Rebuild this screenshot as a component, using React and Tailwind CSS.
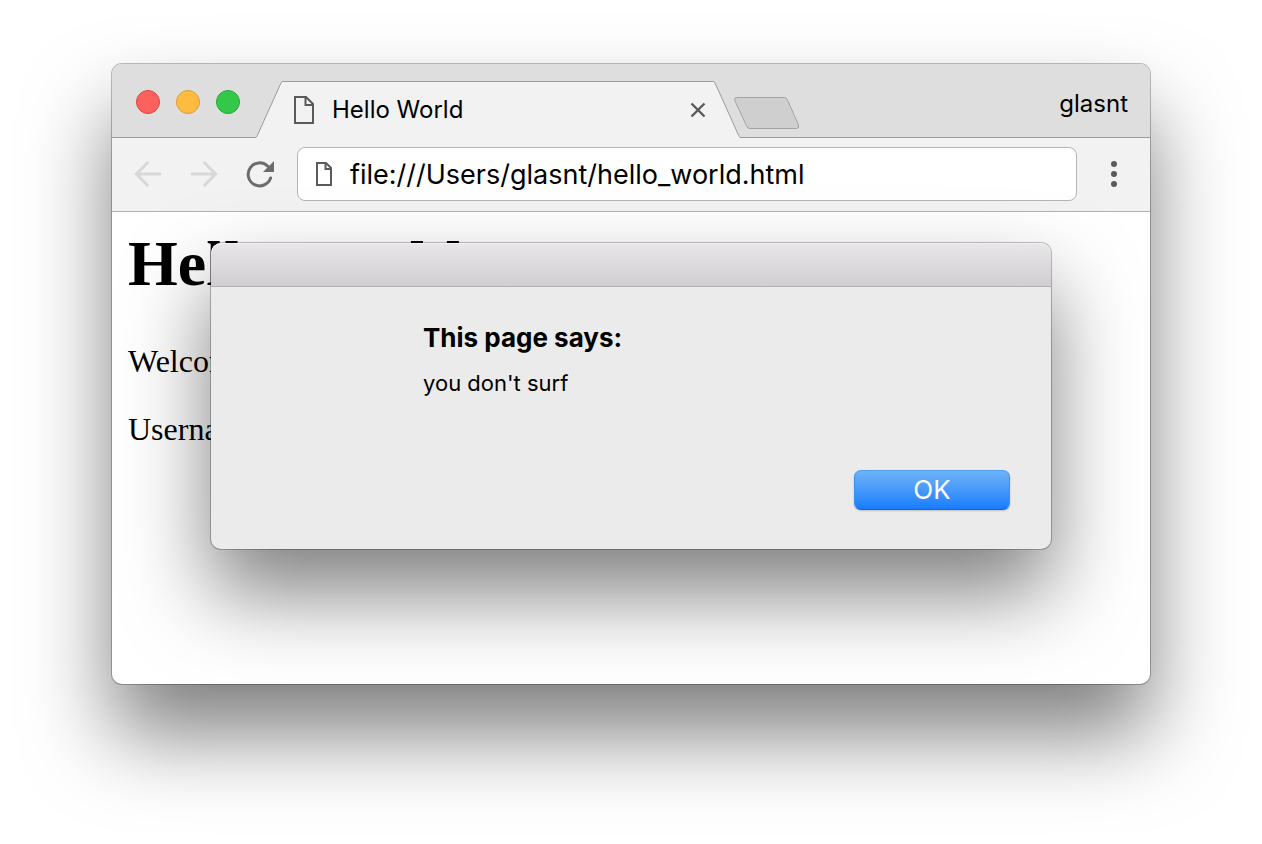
function PageIcon({ className }) {
  return (
    <svg className={className} viewBox="0 0 20 28" fill="none" stroke="#5a5a5a" strokeWidth="2" aria-hidden="true">
      <path d="M1 1H12L19 8V27H1Z" />
      <path d="M11.5 1V9H19" />
    </svg>
  );
}

function SmallPageIcon() {
  return (
    <svg className="h-6 w-4 shrink-0" viewBox="0 0 16 24" fill="none" stroke="#5a5a5a" strokeWidth="2" aria-hidden="true">
      <path d="M1 1H10L15 6V23H1Z" />
      <path d="M9.5 1V7H15" />
    </svg>
  );
}

function TrafficLights() {
  return (
    <div className="flex h-full items-center gap-4 pt-0.5">
      <button aria-label="Close window" className="size-6 rounded-full border border-[#e2463f] bg-[#fc615d]" />
      <button aria-label="Minimize window" className="size-6 rounded-full border border-[#dfa033] bg-[#fdbc40]" />
      <button aria-label="Zoom window" className="size-6 rounded-full border border-[#27aa35] bg-[#34c84a]" />
    </div>
  );
}

function Tab() {
  return (
    <div className="-mb-px flex h-[57px] w-[484px] min-w-0 self-end">
      <svg className="h-full w-[26px] shrink-0" viewBox="0 0 26 57" aria-hidden="true">
        <path d="M-1 56.5Q.5 56.5 1.3 54.500L24.500 3Q25.500 .5 27 .5V57H-1Z" fill="#f2f2f2" />
        <path d="M-1 56.5Q.5 56.5 1.3 54.500L24.500 3Q25.500 .5 27 .5" fill="none" stroke="#9b9b9b" />
      </svg>
      <div className="flex min-w-0 flex-1 items-center gap-[18px] border-t border-[#9b9b9b] bg-[#f2f2f2] pl-3">
        <PageIcon className="h-7 w-5 shrink-0" />
        <span className="flex-1 truncate text-2xl">Hello World</span>
        <button aria-label="Close tab" className="p-2">
          <svg className="size-4" viewBox="0 0 16 16" fill="none" stroke="#5a5a5a" strokeWidth="2.4" aria-hidden="true">
            <path d="M1.5 1.5L14.5 14.5M14.5 1.5L1.5 14.5" />
          </svg>
        </button>
      </div>
      <svg className="h-full w-[26px] shrink-0" viewBox="0 0 26 57" aria-hidden="true">
        <path d="M27 56.5Q25.500 56.5 24.700 54.500L1.500 3Q.5 .5 -1 .5V57H27Z" fill="#f2f2f2" />
        <path d="M27 56.5Q25.500 56.5 24.700 54.500L1.500 3Q.5 .5 -1 .5" fill="none" stroke="#9b9b9b" />
      </svg>
    </div>
  );
}

function TabStrip() {
  return (
    <header className="flex h-[74px] items-center rounded-t-[10px] border-b border-[#9b9b9b] bg-[#dedede] pr-[22px] pl-6">
      <TrafficLights />
      <div className="ml-4 flex min-w-0 self-stretch">
        <Tab />
      </div>
      <button aria-label="New tab" className="-ml-1.5 pt-6">
        <svg className="h-8 w-[66px]" viewBox="0 0 66 32" aria-hidden="true">
          <path
            d="M3 .5H50Q52.500 .5 53.500 3L64.500 28Q65.500 31.500 62.500 31.500H16Q13.500 31.500 12.500 29L.8 3.500Q0 .5 3 .5Z"
            fill="#cfcfcf"
            stroke="#a3a3a3"
          />
        </svg>
      </button>
      <button className="ml-auto pt-1.5 text-2xl">glasnt</button>
    </header>
  );
}

function Toolbar() {
  return (
    <nav className="flex h-[74px] items-center border-b border-[#b1b1b1] bg-[#f2f2f2] pb-0.5 pl-2">
      <button aria-label="Back" disabled className="flex w-14 justify-center">
        <svg className="size-7" viewBox="0 0 28 28" fill="none" stroke="#d7d7d7" strokeWidth="2.800" strokeLinecap="round" aria-hidden="true">
          <path d="M26 14H2.500M13.500 2.800L2.300 14L13.500 25.200" />
        </svg>
      </button>
      <button aria-label="Forward" disabled className="flex w-14 justify-center">
        <svg className="size-7" viewBox="0 0 28 28" fill="none" stroke="#d7d7d7" strokeWidth="2.800" strokeLinecap="round" aria-hidden="true">
          <path d="M2 14H25.500M14.500 2.800L25.700 14L14.500 25.200" />
        </svg>
      </button>
      <button aria-label="Reload" className="flex w-14 justify-center">
        <svg className="size-7" viewBox="0 0 28 28" aria-hidden="true">
          <path d="M21.800 6.200A11.500 11.500 0 1 0 24.600 18" fill="none" stroke="#6c6c6c" strokeWidth="3" strokeLinecap="round" />
          <path d="M28 1V12H17Z" fill="#6c6c6c" />
        </svg>
      </button>
      <label className="ml-[9px] flex h-[54px] min-w-0 flex-1 items-center gap-[18px] rounded-lg border border-[#b5b5b5] bg-white pl-[18px]">
        <SmallPageIcon />
        <input
          aria-label="Address"
          defaultValue="file:///Users/glasnt/hello_world.html"
          spellCheck={false}
          className="min-w-0 flex-1 bg-transparent pt-1 text-[27px] outline-none"
        />
      </label>
      <button aria-label="Menu" className="flex w-[73px] justify-center">
        <svg className="h-7 w-2" viewBox="0 0 8 28" fill="#5a5a5a" aria-hidden="true">
          <circle cx="4" cy="4" r="3" />
          <circle cx="4" cy="14" r="3" />
          <circle cx="4" cy="24" r="3" />
        </svg>
      </button>
    </nav>
  );
}

function AlertDialog() {
  return (
    <div
      role="alertdialog"
      aria-labelledby="alert-title"
      aria-describedby="alert-message"
      className="absolute inset-x-[99px] top-[179px] rounded-[10px] bg-[#ebebeb] shadow-[0_0_0_1px_rgba(0,0,0,0.25),0_44px_84px_rgba(0,0,0,0.5)]"
    >
      <div className="h-11 rounded-t-[10px] border-t border-b border-t-[#f3f1f3] border-b-[#b0aeb0] bg-linear-to-b from-[#e9e6e9] to-[#d1ced1]" />
      <div className="px-[41px] pt-8 pb-[39px]">
        <div className="pl-[171px]">
          <h2 id="alert-title" className="text-[26px] leading-[38px] font-bold">This page says:</h2>
          <p id="alert-message" className="pt-2.5 text-[22px] leading-8">you don't surf</p>
        </div>
        <div className="mt-[71px] flex justify-end">
          <button className="h-10 w-[156px] rounded-[7px] border border-t-[#4ba0f5] border-x-[#3a8ff5] border-b-[#0d62f2] bg-linear-to-b from-[#6db3f8] to-[#157cfd] text-[26px] leading-9 text-white shadow-[0_1px_2px_rgba(0,0,0,0.2)]">
            OK
          </button>
        </div>
      </div>
    </div>
  );
}

export default function App() {
  return (
    <div className="min-h-screen bg-white px-28 pt-16 pb-40 font-['Inter',sans-serif] text-black">
      <div className="relative rounded-[10px] bg-white shadow-[0_0_0_1px_rgba(0,0,0,0.25),0_50px_84px_rgba(0,0,0,0.5)]">
        <TabStrip />
        <Toolbar />
        <main className="min-h-[472px] px-4 pt-4 font-['Liberation_Serif',serif] text-[32px] leading-9">
          <h1 className="text-[64px] leading-[72px] font-bold">Hello World</h1>
          <p className="mt-[43px]">Welcome</p>
          <p className="mt-8">Username</p>
        </main>
        <AlertDialog />
      </div>
    </div>
  );
}
